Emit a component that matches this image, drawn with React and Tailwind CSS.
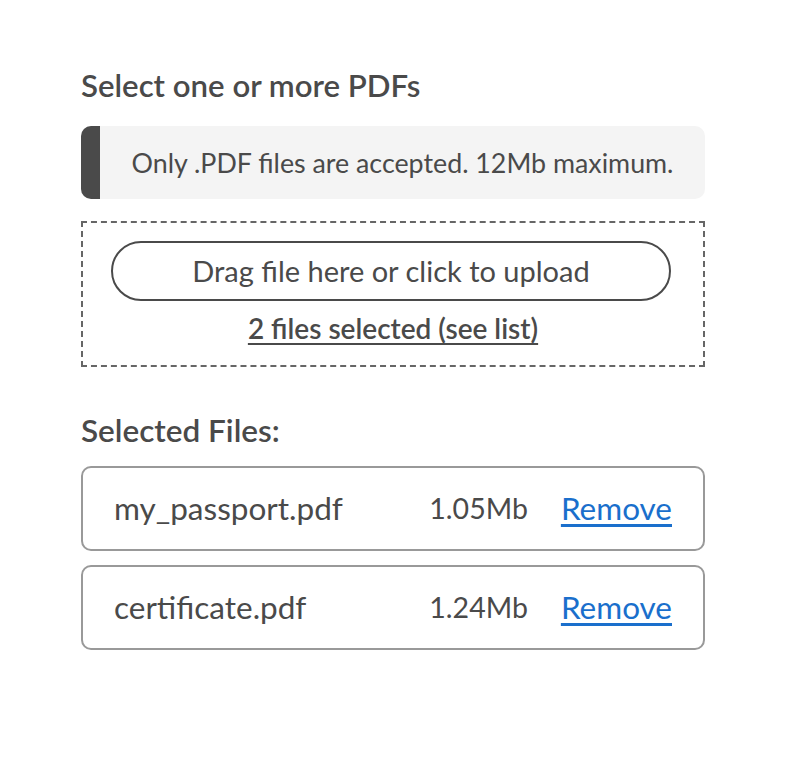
const files = [
  { name: 'my_passport.pdf', size: '1.05Mb' },
  { name: 'certificate.pdf', size: '1.24Mb' },
];

export default function App() {
  return (
    <div
      className="min-h-screen bg-white px-[81px] pt-[66px] text-[#4a4a4a]"
      style={{ fontFamily: 'Lato, "Liberation Sans", sans-serif' }}
    >
      <div className="w-[624px]">
        <h2 className="text-[31.2px] font-semibold leading-[38px]">Select one or more PDFs</h2>

        {/* Notice */}
        <div className="mt-[22px] flex h-[73px] overflow-hidden rounded-[10px] bg-[#f4f4f4]">
          <div className="w-[19px] bg-[#4a4a4a]" />
          <div className="flex flex-1 items-center justify-center pt-px text-[26.8px]">
            Only .PDF files are accepted. 12Mb maximum.
          </div>
        </div>

        {/* Drop zone */}
        <div className="mt-[22px] flex h-[146px] flex-col items-center border-2 border-dashed border-[#666] pl-[28px] pr-[32px] pt-[18px]">
          <button className="flex h-[60px] w-full items-center justify-center rounded-full border-2 border-[#4a4a4a] text-[29px] text-[#4a4a4a]">
            Drag file here or click to upload
          </button>
          <a href="#" className="ml-[4px] mt-[10px] text-[28px] font-semibold leading-[34px] text-[#4a4a4a] underline underline-offset-4">
            2 files selected (see list)
          </a>
        </div>

        <h2 className="mt-[44px] text-[31.5px] font-semibold leading-[38px]">Selected Files:</h2>

        <div className="mt-[17px] flex flex-col gap-[14px]">
          {files.map((f) => (
            <div
              key={f.name}
              className="flex h-[85px] items-center rounded-[10px] border-2 border-[#999] pl-[31px] pr-[31px] text-[31.5px]"
            >
              <span className="flex-1">{f.name}</span>
              <span className="text-[28.5px]">{f.size}</span>
              <a href="#" className="ml-[33px] text-[#1a6fcc] underline underline-offset-4">
                Remove
              </a>
            </div>
          ))}
        </div>
      </div>
    </div>
  );
}
